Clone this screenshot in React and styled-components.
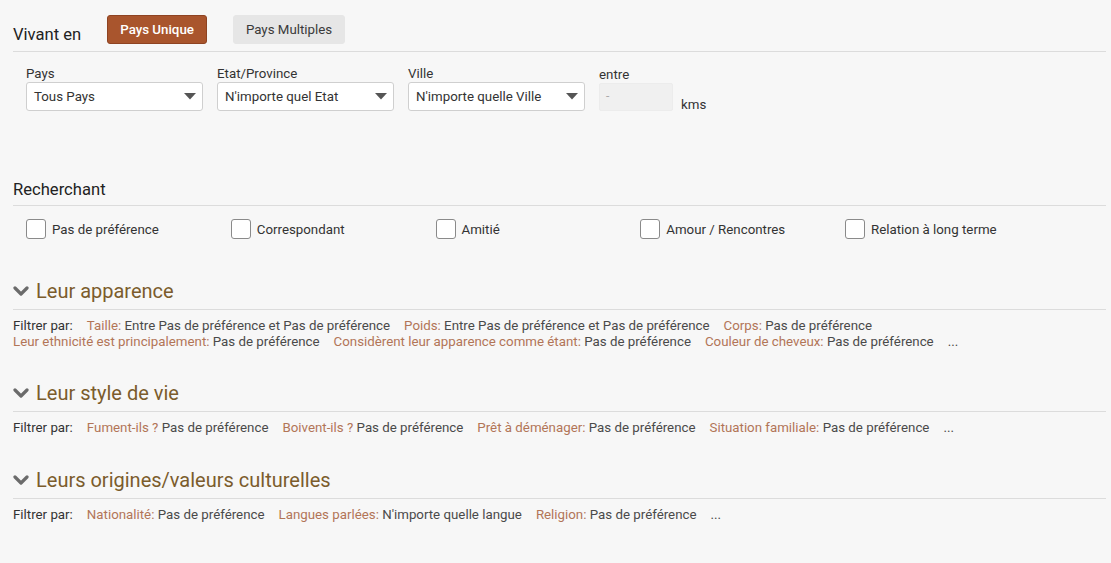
import React from "react";
import styled, { createGlobalStyle } from "styled-components";

const Global = createGlobalStyle`
  html, body { margin: 0; padding: 0; background: #f7f7f7; }
  body { font-family: Roboto, "Liberation Sans", Arial, sans-serif; color: #222; }
  * { box-sizing: border-box; }
`;

const Page = styled.div`
  padding: 15px 5px 40px 13px;
  min-height: 563px;
  background: #f7f7f7;
`;

const SectionHeader = styled.div`
  display: flex;
  align-items: flex-end;
  gap: 26px;
  padding-bottom: ${(p) => p.$pb || 6}px;
  border-bottom: 1px solid #dcdcdc;
  margin-top: ${(p) => p.$mt || 0}px;
`;

const SectionTitle = styled.div`
  font-size: 16.6px;
  line-height: 20px;
  color: #222;
`;

const ToggleButton = styled.button`
  font-family: inherit;
  font-size: 13.3px;
  height: 29px;
  padding: 0 12px;
  border-radius: 3px;
  cursor: pointer;
  border: 1px solid ${(p) => (p.$active ? "#8e4322" : "#e6e6e6")};
  background: ${(p) => (p.$active ? "#a9552d" : "#e6e6e6")};
  color: ${(p) => (p.$active ? "#fff" : "#3a3a3a")};
  font-weight: ${(p) => (p.$active ? 500 : 400)};
  margin-bottom: 1px;
`;

const FieldsRow = styled.div`
  display: flex;
  align-items: flex-end;
  gap: 14px;
  padding-left: 13px;
  margin-top: 14px;
`;

const Field = styled.div`
  display: flex;
  flex-direction: column;
  width: ${(p) => p.$w}px;
`;

const Label = styled.div`
  font-size: 13.3px;
  line-height: 16px;
  color: #333;
`;

const SelectBox = styled.div`
  height: 29px;
  background: #fff;
  border: 1px solid #cfcfcf;
  border-radius: 3px;
  display: flex;
  align-items: center;
  justify-content: space-between;
  padding: 0 6px 0 7px;
  font-size: 13.3px;
  color: #333;
`;

const NumInput = styled.div`
  height: 28px;
  background: #f0f0f0;
  border: 1px solid #ececec;
  border-radius: 2px;
  padding: 5px 0 0 6px;
  font-size: 12px;
  color: #aaa;
`;

const Unit = styled.div`
  font-size: 13.3px;
  color: #333;
  margin-left: -6px;
  margin-bottom: -1px;
`;

const Caret = () => (
  <svg width="12" height="7" viewBox="0 0 12 7">
    <path d="M0 0 L12 0 L6 6.5 Z" fill="#555" />
  </svg>
);

const CheckGrid = styled.div`
  display: grid;
  grid-template-columns: repeat(5, 204.75px);
  padding-left: 13px;
  margin-top: 13px;
`;

const CheckItem = styled.label`
  display: flex;
  align-items: center;
  gap: 6px;
  font-size: 13.3px;
  color: #333;
`;

const Box = styled.span`
  width: 20px;
  height: 20px;
  border: 1px solid #8a8a8a;
  border-radius: 3px;
  background: #fff;
`;

const GroupHeader = styled.div`
  display: flex;
  align-items: center;
  gap: 7px;
  padding-bottom: 6px;
  border-bottom: 1px solid #dcdcdc;
  margin-top: ${(p) => p.$mt}px;
`;

const GroupTitle = styled.div`
  font-size: 20px;
  line-height: 23px;
  color: #7b5c2c;
`;

const Chevron = () => (
  <svg width="16" height="11" viewBox="0 0 16 11">
    <path d="M2 2 L8 8 L14 2" fill="none" stroke="#6b6b6b" strokeWidth="3.2" strokeLinecap="round" strokeLinejoin="round" />
  </svg>
);

const FilterRow = styled.div`
  margin-top: 8px;
  font-size: 13.3px;
  line-height: 16px;
  color: #4a4a4a;
`;

const FilterItem = styled.span`
  display: inline-block;
  vertical-align: top;
  margin-right: 14px;
  color: ${(p) => (p.$lead ? "#333" : "#4a4a4a")};
`;

const FilterKey = styled.span`
  color: #b27557;
`;

const Filters = ({ items }) => (
  <FilterRow>
    <FilterItem $lead>Filtrer par:</FilterItem>
    {items.map(([k, v]) => (
      <FilterItem key={k}>
        <FilterKey>{k}</FilterKey> {v}
      </FilterItem>
    ))}
    <FilterItem>...</FilterItem>
  </FilterRow>
);

const pdp = "Pas de préférence";

export default function App() {
  return (
    <Page>
      <Global />
      <SectionHeader>
        <SectionTitle>Vivant en</SectionTitle>
        <ToggleButton $active>Pays Unique</ToggleButton>
        <ToggleButton>Pays Multiples</ToggleButton>
      </SectionHeader>

      <FieldsRow>
        <Field $w={177}>
          <Label>Pays</Label>
          <SelectBox>
            Tous Pays <Caret />
          </SelectBox>
        </Field>
        <Field $w={177}>
          <Label>Etat/Province</Label>
          <SelectBox>
            N'importe quel Etat <Caret />
          </SelectBox>
        </Field>
        <Field $w={177}>
          <Label>Ville</Label>
          <SelectBox>
            N'importe quelle Ville <Caret />
          </SelectBox>
        </Field>
        <Field $w={74}>
          <Label>entre</Label>
          <NumInput>-</NumInput>
        </Field>
        <Unit>kms</Unit>
      </FieldsRow>

      <SectionHeader $mt={69} $pb={5}>
        <SectionTitle>Recherchant</SectionTitle>
      </SectionHeader>

      <CheckGrid>
        {["Pas de préférence", "Correspondant", "Amitié", "Amour / Rencontres", "Relation à long terme"].map((t) => (
          <CheckItem key={t}>
            <Box />
            {t}
          </CheckItem>
        ))}
      </CheckGrid>

      <GroupHeader $mt={41}>
        <Chevron />
        <GroupTitle>Leur apparence</GroupTitle>
      </GroupHeader>
      <Filters
        items={[
          ["Taille:", `Entre ${pdp} et ${pdp}`],
          ["Poids:", `Entre ${pdp} et ${pdp}`],
          ["Corps:", pdp],
          ["Leur ethnicité est principalement:", pdp],
          ["Considèrent leur apparence comme étant:", pdp],
          ["Couleur de cheveux:", pdp],
        ]}
      />

      <GroupHeader $mt={32}>
        <Chevron />
        <GroupTitle>Leur style de vie</GroupTitle>
      </GroupHeader>
      <Filters
        items={[
          ["Fument-ils ?", pdp],
          ["Boivent-ils ?", pdp],
          ["Prêt à déménager:", pdp],
          ["Situation familiale:", pdp],
        ]}
      />

      <GroupHeader $mt={33}>
        <Chevron />
        <GroupTitle>Leurs origines/valeurs culturelles</GroupTitle>
      </GroupHeader>
      <Filters
        items={[
          ["Nationalité:", pdp],
          ["Langues parlées:", "N'importe quelle langue"],
          ["Religion:", pdp],
        ]}
      />
    </Page>
  );
}
